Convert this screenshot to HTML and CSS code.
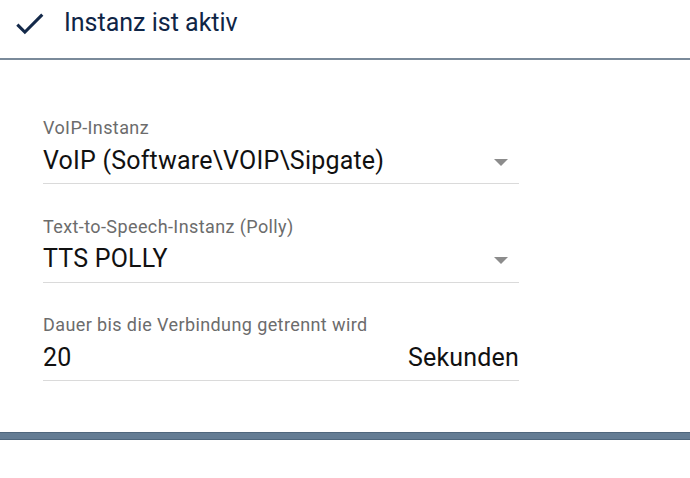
FILE: index.html
```html
<!DOCTYPE html>
<html lang="de">
<head>
<meta charset="utf-8">
<title>Instanz</title>
<link rel="stylesheet" href="styles.css">
</head>
<body>
<div class="page">
  <header class="header">
    <svg class="check" viewBox="0 0 24 24" width="37" height="37" aria-hidden="true">
      <path d="M9 16.17L4.83 12l-1.42 1.41L9 19 21 7l-1.41-1.41z" fill="currentColor"/>
    </svg>
    <span class="title">Instanz ist aktiv</span>
  </header>
  <main class="content">
    <div class="field">
      <div class="label">VoIP-Instanz</div>
      <div class="control">
        <span class="value">VoIP (Software\VOIP\Sipgate)</span>
        <span class="arrow"></span>
      </div>
    </div>
    <div class="field">
      <div class="label">Text-to-Speech-Instanz (Polly)</div>
      <div class="control">
        <span class="value">TTS POLLY</span>
        <span class="arrow"></span>
      </div>
    </div>
    <div class="field">
      <div class="label">Dauer bis die Verbindung getrennt wird</div>
      <div class="control">
        <span class="value">20</span>
        <span class="suffix">Sekunden</span>
      </div>
    </div>
  </main>
  <div class="bar"></div>
</div>
</body>
</html>
```
FILE: styles.css
```css
html, body {
  margin: 0;
  padding: 0;
  background: #ffffff;
}
body {
  font-family: Roboto, "Liberation Sans", sans-serif;
  width: 690px;
  height: 478px;
  overflow: hidden;
}
.header {
  display: flex;
  align-items: center;
  height: 46px;
  padding: 0 0 12px 11px;
  border-bottom: 2px solid #7a8a9a;
  color: #10284a;
}
.check {
  display: block;
  color: #14294a;
}
.title {
  margin-left: 16px;
  font-size: 25px;
  line-height: 30px;
  color: #0f2546;
}
.content {
  padding: 57px 0 0 43px;
  width: 476px;
  display: flex;
  flex-direction: column;
  gap: 31.5px;
}
.label {
  font-size: 18px;
  line-height: 22px;
  letter-spacing: 0.4px;
  color: #6c6c6c;
}
.control {
  display: flex;
  align-items: center;
  justify-content: space-between;
  margin-top: 6.5px;
  height: 30px;
  padding-bottom: 7.5px;
  border-bottom: 1px solid #dadada;
}
.value, .suffix {
  font-size: 25px;
  line-height: 30px;
  letter-spacing: 0.2px;
  color: #111111;
}
.arrow {
  width: 0;
  height: 0;
  margin-right: 11px;
  margin-top: 3px;
  border-left: 7.5px solid transparent;
  border-right: 7.5px solid transparent;
  border-top: 7.5px solid #8c8c8c;
}
.bar {
  margin-top: 51px;
  height: 6px;
  background: #657d94;
  border-top: 1px solid #50677d;
  border-bottom: 1px solid #50677d;
}
```
